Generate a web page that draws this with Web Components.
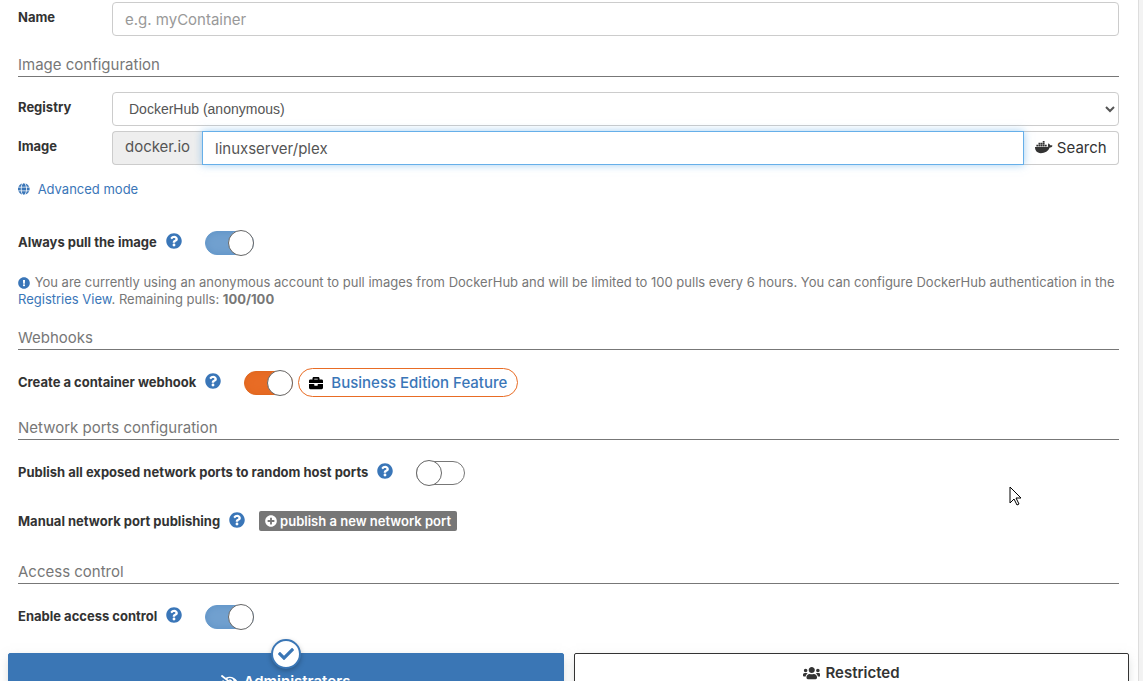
<!DOCTYPE html>
<html lang="en">
<head>
<meta charset="utf-8">
<meta name="viewport" content="width=device-width, initial-scale=1">
<title>Create container</title>
<style>
    body {
        margin: 0;
        background: #f3f3f3;
        color: #333;
        font-family: Inter, "Liberation Sans", sans-serif;
        font-size: 13px;
        line-height: 20px;
    }
</style>
</head>
<body>
<container-form></container-form>

<script>
// icon-glyph: [width, path], every glyph is 512 high
const GLYPHS = {
    question: [512, 'M504 256c0 136.997-111.043 248-248 248S8 392.997 8 256C8 119.083 119.043 8 256 8s248 111.083 248 248zM262.655 90c-54.497 0-89.255 22.957-116.549 63.758-3.536 5.286-2.353 12.415 2.715 16.258l34.699 26.31c5.205 3.947 12.621 3.008 16.665-2.122 17.864-22.658 30.113-35.797 57.303-35.797 20.429 0 45.698 13.148 45.698 32.958 0 14.976-12.363 22.667-32.534 33.976C247.128 238.528 216 254.941 216 296v4c0 6.627 5.373 12 12 12h56c6.627 0 12-5.373 12-12v-1.333c0-28.462 83.186-29.647 83.186-106.667 0-58.002-60.165-102-116.531-102zM256 338c-25.365 0-46 20.635-46 46 0 25.364 20.635 46 46 46s46-20.636 46-46c0-25.365-20.635-46-46-46z'],
    exclamation: [512, 'M504 256c0 136.997-111.043 248-248 248S8 392.997 8 256C8 119.083 119.043 8 256 8s248 111.083 248 248zm-248 50c-25.405 0-46 20.595-46 46s20.595 46 46 46 46-20.595 46-46-20.595-46-46-46zm-43.673-165.346l7.418 136c.347 6.364 5.609 11.346 11.982 11.346h48.546c6.373 0 11.635-4.982 11.982-11.346l7.418-136c.375-6.874-5.098-12.654-11.982-12.654h-63.383c-6.884 0-12.356 5.78-11.981 12.654z'],
    globe: [496, 'M336.5 160C322 70.7 287.8 8 248 8s-74 62.7-88.5 152h177zM152 256c0 22.2 1.2 43.5 3.3 64h185.3c2.1-20.5 3.3-41.8 3.3-64s-1.2-43.5-3.3-64H155.3c-2.1 20.5-3.3 41.8-3.3 64zm324.7-96c-28.6-67.9-86.5-120.4-158-141.6 24.4 33.8 41.2 84.7 50 141.6h108zM177.2 18.4C105.8 39.6 47.8 92.1 19.3 160h108c8.7-56.9 25.5-107.8 49.9-141.6zM487.4 192H372.7c2.1 21 3.3 42.5 3.3 64s-1.2 43-3.3 64h114.6c5.5-20.5 8.6-41.8 8.6-64s-3.1-43.5-8.5-64zM120 256c0-21.5 1.2-43 3.3-64H8.6C3.2 212.5 0 233.8 0 256s3.2 43.5 8.6 64h114.6c-2-21-3.2-42.5-3.2-64zm39.5 96c14.5 89.3 48.7 152 88.5 152s74-62.7 88.5-152h-177zm159.3 141.6c71.4-21.2 129.4-73.7 158-141.6h-108c-8.8 56.9-25.6 107.8-50 141.6zM19.3 352c28.6 67.9 86.5 120.4 158 141.6-24.4-33.8-41.2-84.7-50-141.6h-108z'],
    plus: [512, 'M256 8C119 8 8 119 8 256s111 248 248 248 248-111 248-248S393 8 256 8zm144 276c0 6.6-5.4 12-12 12h-92v92c0 6.6-5.4 12-12 12h-56c-6.6 0-12-5.4-12-12v-92h-92c-6.6 0-12-5.4-12-12v-56c0-6.6 5.4-12 12-12h92v-92c0-6.6 5.4-12 12-12h56c6.6 0 12 5.4 12 12v92h92c6.6 0 12 5.4 12 12v56z'],
    briefcase: [512, 'M320 336c0 8.84-7.16 16-16 16h-96c-8.84 0-16-7.16-16-16v-48H0v144c0 25.6 22.4 48 48 48h416c25.6 0 48-22.4 48-48V288H320v48zm144-208h-80V80c0-25.6-22.4-48-48-48H176c-25.6 0-48 22.4-48 48v48H48c-25.6 0-48 22.4-48 48v80h512v-80c0-25.6-22.4-48-48-48zm-144 0H192V96h128v32z'],
    check: [512, 'M173.898 439.404l-166.4-166.4c-9.997-9.997-9.997-26.206 0-36.204l36.203-36.204c9.997-9.998 26.207-9.998 36.204 0L192 312.69 432.095 72.596c9.997-9.997 26.207-9.997 36.204 0l36.203 36.204c9.997 9.997 9.997 26.206 0 36.204l-294.4 294.401c-9.998 9.997-26.207 9.997-36.204-.001z'],
    users: [640, 'M96 224c35.3 0 64-28.7 64-64s-28.7-64-64-64-64 28.7-64 64 28.7 64 64 64zm448 0c35.3 0 64-28.7 64-64s-28.7-64-64-64-64 28.7-64 64 28.7 64 64 64zm32 32h-64c-17.6 0-33.5 7.1-45.1 18.6 40.3 22.1 68.9 62 75.1 109.4h66c17.7 0 32-14.3 32-32v-32c0-35.3-28.7-64-64-64zm-256 0c61.9 0 112-50.1 112-112S381.9 32 320 32 208 82.1 208 144s50.1 112 112 112zm76.8 32h-8.3c-20.8 10-43.9 16-68.5 16s-47.6-6-68.5-16h-8.3C179.6 288 128 339.6 128 403.2V432c0 26.5 21.5 48 48 48h288c26.5 0 48-21.5 48-48v-28.8c0-63.6-51.6-115.2-115.2-115.2zm-223.7-13.4C161.5 263.1 145.6 256 128 256H64c-35.3 0-64 28.7-64 64v32c0 17.7 14.3 32 32 32h65.9c6.3-47.4 34.9-87.3 75.2-109.4z'],
    docker: [640, 'M349.9 236.3h-66.1v-59.4h66.1v59.4zm0-204.3h-66.1v60.7h66.1V32zm78.2 144.8H362v59.4h66.1v-59.4zm-156.3-72.1h-66.1v60.1h66.1v-60.1zm78.1 0h-66.1v60.1h66.1v-60.1zm276.8 100c-14.4-9.7-47.6-13.2-73.1-8.4-3.3-24-16.7-44.9-41.1-63.7l-14-9.3-9.3 14c-18.4 27.8-23.4 73.6-3.7 103.8-8.7 4.7-25.8 11.1-48.4 10.7H2.4c-8.7 50.8 5.8 116.8 44 162.1 37.1 43.9 92.7 66.2 165.4 66.2 157.4 0 273.9-72.5 328.4-204.2 21.4.4 67.6.1 91.3-45.2 1.5-2.5 6.6-13.2 8.5-17.1l-13.3-8.9zm-511.1-27.9h-66v59.4h66.1v-59.4zm78.1 0h-66.1v59.4h66.1v-59.4zm78.1 0h-66.1v59.4h66.1v-59.4zm-78.1-72.1h-66.1v60.1h66.1v-60.1z'],
    eyeSlash: [640, 'M320 400c-75.85 0-137.25-58.71-142.9-133.11L72.2 185.82c-13.79 17.3-26.48 35.59-36.72 55.59a32.35 32.35 0 0 0 0 29.19C89.71 376.41 197.07 448 320 448c26.91 0 52.87-4 77.89-10.46L346 397.39a144.13 144.13 0 0 1-26 2.61zm313.82 58.1l-110.55-85.44a331.25 331.25 0 0 0 81.25-102.07 32.35 32.35 0 0 0 0-29.19C550.29 135.59 442.93 64 320 64a308.15 308.15 0 0 0-147.32 37.7L45.46 3.37A16 16 0 0 0 23 6.18L3.37 31.45A16 16 0 0 0 6.18 53.9l588.36 454.73a16 16 0 0 0 22.46-2.81l19.64-25.27a16 16 0 0 0-2.82-22.45zm-183.72-142l-39.3-30.38A94.75 94.75 0 0 0 416 256a94.76 94.76 0 0 0-121.31-92.21A47.65 47.65 0 0 1 304 192a46.64 46.64 0 0 1-1.54 10l-73.61-56.89A142.31 142.31 0 0 1 320 112a143.92 143.92 0 0 1 144 144c0 21.63-5.29 41.79-13.9 60.11z']
};

class IconGlyph extends HTMLElement {
    constructor() {
        super();
        const shadow = this.attachShadow({ mode: 'open' });
        const [width, path] = GLYPHS[this.getAttribute('name')];
        shadow.innerHTML = `
        <style>
            :host { display: inline-block; flex: none; height: var(--icon-size, 14px); }
            svg { display: block; height: 100%; fill: currentColor; }
        </style>
        <svg viewBox="0 0 ${width} 512" aria-hidden="true"><path d="${path}"/></svg>
        `;
    }
}

class SectionTitle extends HTMLElement {
    constructor() {
        super();
        this.attachShadow({ mode: 'open' }).innerHTML = `
        <style>
            :host { display: block; }
            h2 {
                margin: 0;
                padding-bottom: 1px;
                border-bottom: 1px solid #777;
                color: #777;
                font-size: 15px;
                font-weight: 400;
                line-height: 20px;
            }
        </style>
        <h2><slot></slot></h2>
        `;
    }
}

// Shared by the rows that have a label column and a control
const FIELD_STYLE = `
    * { box-sizing: border-box; }
    :host { display: block; }
    .row { display: flex; align-items: flex-start; }
    label { flex: 0 0 94px; padding-top: 5px; font-weight: 700; }
    input, select {
        flex: 1;
        min-width: 0;
        height: 34px;
        margin: 0;
        padding: 6px 12px;
        border: 1px solid #ccc;
        border-radius: 4px;
        background: #fff;
        color: #555;
        font-family: inherit;
        font-size: 15px;
        outline: none;
    }
`;

class TextField extends HTMLElement {
    constructor() {
        super();
        const label = this.getAttribute('label');
        const placeholder = this.getAttribute('placeholder') || '';
        this.attachShadow({ mode: 'open' }).innerHTML = `
        <style>
            ${FIELD_STYLE}
            input::placeholder { color: #999; opacity: 1; }
        </style>
        <div class="row">
            <label for="field">${label}</label>
            <input id="field" type="text" placeholder="${placeholder}">
        </div>
        `;
    }
}

class SelectField extends HTMLElement {
    constructor() {
        super();
        const label = this.getAttribute('label');
        const options = this.getAttribute('options').split('|').map(o => `<option>${o}</option>`).join('');
        this.attachShadow({ mode: 'open' }).innerHTML = `
        <style>
            ${FIELD_STYLE}
            select { font-family: "Liberation Sans", sans-serif; font-size: 14px; }
        </style>
        <div class="row">
            <label for="field">${label}</label>
            <select id="field">${options}</select>
        </div>
        `;
    }
}

class ImageField extends HTMLElement {
    constructor() {
        super();
        const registry = this.getAttribute('registry');
        const image = this.getAttribute('image');
        this.attachShadow({ mode: 'open' }).innerHTML = `
        <style>
            ${FIELD_STYLE}
            .group { display: flex; flex: 1; min-width: 0; height: 34px; }
            .addon, button {
                display: flex;
                align-items: center;
                justify-content: center;
                padding: 0 0 2px;
                border: 1px solid #ccc;
                font-size: 15px;
            }
            .addon {
                flex: 0 0 90px;
                border-right: 0;
                border-radius: 4px 0 0 4px;
                background: #eee;
                color: #555;
            }
            input {
                z-index: 1;
                border-color: #66afe9;
                border-radius: 0;
                box-shadow: 0 0 8px rgba(102, 175, 233, 0.6);
            }
            button {
                flex: 0 0 95px;
                gap: 4px;
                border-left: 0;
                border-radius: 0 4px 4px 0;
                background: #fff;
                color: #333;
                font-family: inherit;
                cursor: pointer;
            }
        </style>
        <div class="row">
            <label for="field">Image</label>
            <div class="group">
                <span class="addon">${registry}</span>
                <input id="field" type="text" value="${image}">
                <button type="button"><icon-glyph name="docker"></icon-glyph>Search</button>
            </div>
        </div>
        `;
    }
}

class ToggleSwitch extends HTMLElement {
    constructor() {
        super();
        const checked = this.hasAttribute('checked') ? 'checked' : '';
        this.attachShadow({ mode: 'open' }).innerHTML = `
        <style>
            :host {
                display: flex;
                align-items: center;
                min-height: 31px;
            }
            label { padding-bottom: 2px; font-weight: 700; white-space: nowrap; }
            .help { --icon-size: 16px; margin: 0 23px 4px 9px; color: #3a76b8; }
            input {
                display: flex;
                align-items: center;
                appearance: none;
                box-sizing: border-box;
                width: 49px;
                height: 24px;
                margin: 0;
                border: 1px solid #777;
                border-radius: 12px;
                background: #fff;
                cursor: pointer;
            }
            input::before {
                content: "";
                flex: none;
                box-sizing: border-box;
                width: 26px;
                height: 26px;
                margin: 0 -1px;
                border: 1px solid #666;
                border-radius: 50%;
                background: #fff;
            }
            input:checked {
                justify-content: flex-end;
                border-color: var(--toggle-edge, #6699cb);
                background: var(--toggle-fill, #71a0cf);
                box-shadow: inset 0 0 6px var(--toggle-edge, #5f93c6);
            }
            ::slotted(a) { margin-left: 5px; }
        </style>
        <label for="toggle">${this.getAttribute('label')}</label>
        <icon-glyph class="help" name="question"></icon-glyph>
        <input id="toggle" type="checkbox" ${checked}>
        <slot></slot>
        `;
    }
}

class AccessBox extends HTMLElement {
    constructor() {
        super();
        const checked = this.hasAttribute('checked') ? 'checked' : '';
        this.attachShadow({ mode: 'open' }).innerHTML = `
        <style>
            :host { display: block; flex: 1; }
            input { position: absolute; opacity: 0; }
            label {
                position: relative;
                display: flex;
                justify-content: center;
                gap: 5px;
                box-sizing: border-box;
                min-height: 90px;
                padding-top: 9px;
                border: 1px solid #333;
                border-radius: 2px;
                background: #fff;
                box-shadow: 0 3px 10px -2px rgba(161, 170, 166, 0.5);
                font-size: 15px;
                font-weight: 600;
                cursor: pointer;
            }
            label icon-glyph { margin-top: 3px; }
            .badge { display: none; }
            input:checked + label {
                padding-top: 18px;
                border-color: #3a76b5;
                background: #3a76b5;
                color: #fff;
            }
            /* tick that sits over the top edge */
            input:checked + label .badge {
                --icon-size: 16px;
                position: absolute;
                top: -15px;
                left: 50%;
                display: flex;
                align-items: center;
                justify-content: center;
                box-sizing: border-box;
                width: 30px;
                height: 30px;
                margin-left: -15px;
                border: 2px solid #3a76b5;
                border-radius: 50%;
                background: #fff;
                color: #3a76b5;
                box-shadow: 0 2px 5px rgba(0, 0, 0, 0.25);
            }
            .badge icon-glyph { margin: 0; }
        </style>
        <input id="box" type="radio" ${checked}>
        <label for="box">
            <span class="badge"><icon-glyph name="check"></icon-glyph></span>
            <icon-glyph name="${this.getAttribute('icon')}"></icon-glyph>
            <slot></slot>
        </label>
        `;
    }
}

class ContainerForm extends HTMLElement {
    constructor() {
        super();
        this.attachShadow({ mode: 'open' }).innerHTML = `
        <style>
            :host { display: block; height: 100vh; overflow: hidden; }
            form {
                box-sizing: border-box;
                min-height: 100%;
                margin-right: 4px;
                padding: 2px 19px 0 18px;
                border-right: 1px solid #ddd;
                background: #fff;
            }
            a { color: #3a76b8; text-decoration: none; }
            section-title { margin: 20px 0 17px; }
            .first { margin: 19px 0 15px; }
            .fields { display: flex; flex-direction: column; gap: 5px; }
            .mode { --icon-size: 12px; display: flex; margin: 14px 0 28px; }
            .mode a { display: flex; align-items: center; gap: 8px; }
            .note {
                --icon-size: 12px;
                margin: 16px 0 0;
                color: #777;
                line-height: 17px;
            }
            .note icon-glyph { margin-right: 1px; color: #3a76b8; vertical-align: -2px; }
            .orange { --toggle-fill: #e86c25; --toggle-edge: #e0671f; }
            .pill {
                display: flex;
                align-items: center;
                gap: 8px;
                box-sizing: border-box;
                height: 29px;
                padding: 0 10px;
                border: 1px solid #e86c25;
                border-radius: 15px;
                font-size: 15px;
                font-weight: 500;
            }
            .pill icon-glyph { color: #000; }
            .ports { display: flex; align-items: center; min-height: 30px; margin: 18px 0 26px; font-weight: 700; }
            .ports .help { --icon-size: 16px; margin: 0 14px 3px 9px; color: #3a76b8; }
            .ports button {
                --icon-size: 12px;
                display: flex;
                align-items: center;
                gap: 3px;
                height: 20px;
                padding: 0 6px;
                border: 0;
                border-radius: 2px;
                background: #777;
                color: #fff;
                font-family: inherit;
                font-size: 13px;
                font-weight: 600;
                cursor: pointer;
            }
            .boxes { display: flex; gap: 10px; margin: 21px -10px 0; }
            /* mouse pointer over the page */
            .pointer { position: absolute; left: 1009px; top: 486px; width: 13px; height: 21px; }
        </style>
        <form>
            <text-field label="Name" placeholder="e.g. myContainer"></text-field>

            <section-title class="first">Image configuration</section-title>
            <div class="fields">
                <select-field label="Registry" options="DockerHub (anonymous)"></select-field>
                <image-field registry="docker.io" image="linuxserver/plex"></image-field>
            </div>
            <div class="mode">
                <a href="#"><icon-glyph name="globe"></icon-glyph>Advanced mode</a>
            </div>
            <toggle-switch label="Always pull the image" checked></toggle-switch>
            <p class="note"><icon-glyph name="exclamation"></icon-glyph> You are currently using an anonymous account to pull images from DockerHub and will be limited to 100 pulls every 6 hours. You can configure DockerHub authentication in the <a href="#">Registries View</a>. Remaining pulls: <b>100/100</b></p>

            <section-title>Webhooks</section-title>
            <toggle-switch class="orange" label="Create a container webhook" checked>
                <a class="pill" href="#"><icon-glyph name="briefcase"></icon-glyph>Business Edition Feature</a>
            </toggle-switch>

            <section-title>Network ports configuration</section-title>
            <toggle-switch label="Publish all exposed network ports to random host ports"></toggle-switch>
            <div class="ports">
                <span>Manual network port publishing</span>
                <icon-glyph class="help" name="question"></icon-glyph>
                <button type="button"><icon-glyph name="plus"></icon-glyph>publish a new network port</button>
            </div>

            <section-title>Access control</section-title>
            <toggle-switch label="Enable access control" checked></toggle-switch>
            <div class="boxes">
                <access-box icon="eyeSlash" checked>Administrators</access-box>
                <access-box icon="users">Restricted</access-box>
            </div>
        </form>
        <svg class="pointer" viewBox="0 0 13 21" aria-hidden="true">
            <path d="M1 1v16l4-4 3 6 2-1-3-6h5z" fill="#fff" stroke="#000"/>
        </svg>
        `;
    }
}

customElements.define('icon-glyph', IconGlyph);
customElements.define('section-title', SectionTitle);
customElements.define('text-field', TextField);
customElements.define('select-field', SelectField);
customElements.define('image-field', ImageField);
customElements.define('toggle-switch', ToggleSwitch);
customElements.define('access-box', AccessBox);
customElements.define('container-form', ContainerForm);
</script>
</body>
</html>
